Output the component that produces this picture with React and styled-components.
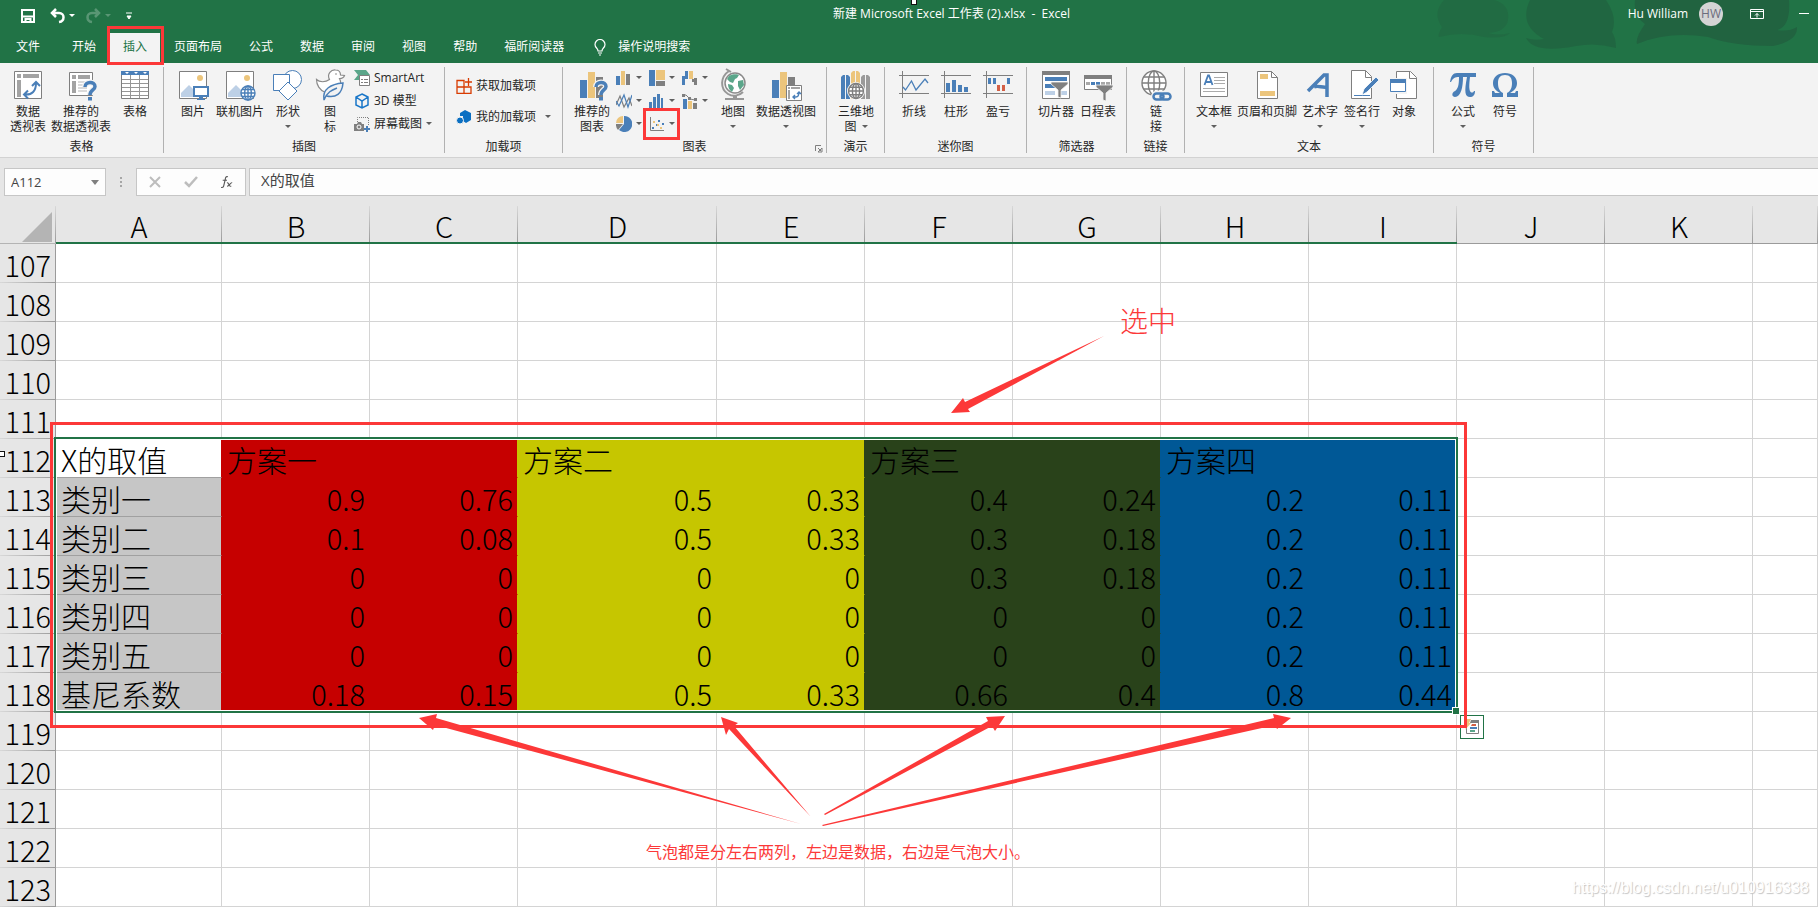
import React from 'react';
import styled, { createGlobalStyle, css } from 'styled-components';

const green = '#217346';
const red = '#fc3838';
const blue = '#4a7fb8';
const gray = '#7f7f7f';
const sand = '#ecc57c';

const GlobalStyle = createGlobalStyle`
  *, *::before, *::after { box-sizing: border-box; }
  body {
    margin: 0;
    background: #fff;
    overflow: hidden;
    font: 12px/15px "Open Sans", "Noto Sans CJK SC", sans-serif;
    color: #262626;
  }
  button, input {
    font: inherit;
    color: inherit;
    background: none;
    border: 0;
    padding: 0;
    margin: 0;
  }
`;

/* ---------- title bar and tabs ---------- */

const TopBar = styled.header`
  position: relative;
  background: ${green};
  color: #fff;
`;

const Backdrop = styled.svg`
  position: absolute;
  top: 0;
  right: 0;
`;

const TitleRow = styled.div`
  position: relative;
  display: grid;
  grid-template-columns: 833fr 985fr;
  align-items: center;
  height: 28px;
`;

const QuickAccess = styled.div`
  display: flex;
  align-items: center;
  padding: 3px 0 0 20px;
`;

const QuickButton = styled.button`
  display: flex;
  align-items: center;
  gap: 4px;
  margin-right: ${(p) => p.$after || 0}px;
  opacity: ${(p) => (p.disabled ? 0.25 : 1)};
`;

const TitleArea = styled.div`
  display: flex;
  align-items: center;
  justify-content: space-between;
  line-height: 24px;
`;

const Title = styled.span`
  white-space: pre;
  margin-bottom: 1px;
`;

const Account = styled.div`
  display: flex;
  align-items: center;
  padding-right: 9px;
`;

const Avatar = styled.span`
  width: 24px;
  height: 24px;
  margin: 0 27px 0 11px;
  border-radius: 50%;
  background: #d4d4d4;
  color: #6c6c7c;
  text-align: center;
`;

const WindowButton = styled.button`
  display: flex;
  margin-right: ${(p) => p.$after || 0}px;
`;

const TabRow = styled.nav`
  position: relative;
  display: flex;
  gap: 1px;
  align-items: flex-end;
  height: 35px;
  padding-left: 3px;
`;

const Tab = styled.button`
  position: relative;
  height: 30px;
  padding: 0 13px 2px;
  line-height: 28px;
  white-space: nowrap;
  margin-right: ${(p) => p.$after || 0}px;
  ${(p) =>
    p.$active &&
    css`
      background: #f3f3f3;
      color: ${green};
      &::after {
        content: '';
        position: absolute;
        z-index: 2;
        inset: -7px -4px -2px -3px;
        border: 3px solid ${red};
      }
    `}
`;

const TellMe = styled.button`
  display: flex;
  align-items: center;
  gap: 12px;
  height: 30px;
  padding: 0 0 2px 16px;
  line-height: 28px;
`;

const PointerMark = styled.i`
  position: absolute;
  z-index: 3;
  width: 6px;
  height: 6px;
  background: #fff;
  border: 1px solid #111;
  ${(p) => (p.$edge === 'top' ? 'left: 911px; top: -1px;' : 'left: -1px; top: 245px;')}
`;

/* ---------- ribbon ---------- */

const Ribbon = styled.div`
  display: flex;
  height: 95px;
  padding: 4px 0;
  background: #f3f3f3;
  border-bottom: 1px solid #d2d2d2;
`;

const Group = styled.section`
  position: relative;
  display: flex;
  flex-direction: column;
  justify-content: space-between;
  flex: 0 0 auto;
  width: ${(p) => p.$width}px;
  border-right: 1px solid #b1b1b1;
`;

const GroupBody = styled.div`
  display: flex;
  height: 69px;
  padding: 2px 0 0 ${(p) => p.$start || 8}px;
`;

const GroupName = styled.div`
  height: 16px;
  line-height: 19px;
  text-align: center;
`;

const BigButton = styled.button`
  display: flex;
  flex-direction: column;
  align-items: center;
  flex: 0 0 ${(p) => p.$width || 42}px;
  width: ${(p) => p.$width || 42}px;
  height: 66px;
  white-space: nowrap;
  text-align: center;
  svg.big { display: block; width: 32px; height: 32px; margin-bottom: 3px; flex: none; overflow: visible; }
`;

const Line = styled.span`
  display: flex;
  align-items: center;
  justify-content: center;
  gap: 5px;
  height: 15px;
`;

const SmallList = styled.div`
  display: flex;
  flex-direction: column;
  gap: ${(p) => p.$gap || 0}px;
  margin: ${(p) => p.$margin || '-3px 0 0 4px'};
`;

const SmallButton = styled.button`
  display: flex;
  align-items: center;
  gap: 4px;
  height: 23px;
  white-space: nowrap;
  svg { flex: none; }
`;

const Arrow = styled.i`
  flex: none;
  width: 0;
  height: 0;
  border: 3px solid transparent;
  border-top-color: ${(p) => p.$color || '#5f5f5f'};
  border-bottom: 0;
  margin-left: ${(p) => p.$before || 0}px;
`;

const ChartGrid = styled.div`
  display: grid;
  grid-template-columns: repeat(3, 33px);
  grid-auto-rows: 23px;
  margin: -3px -1px 0 3px;
`;

const ChartButton = styled.button`
  position: relative;
  display: flex;
  align-items: center;
  gap: 4px;
  ${(p) =>
    p.$marked &&
    css`
      &::after {
        content: '';
        position: absolute;
        z-index: 2;
        inset: -4px 2px -5px -6px;
        border: 3px solid ${red};
      }
    `}
`;

const Launcher = styled.button`
  position: absolute;
  right: 3px;
  bottom: 0;
  display: flex;
`;

/* ---------- formula bar ---------- */

const FormulaBar = styled.div`
  display: flex;
  height: 48px;
  padding: 10px 0 10px 4px;
  background: #e6e6e6;
`;

const Box = styled.div`
  display: flex;
  align-items: center;
  height: 28px;
  background: #fdfdfd;
  border: 1px solid #c6c6c6;
  ${(p) => (p.$width ? `flex: 0 0 ${p.$width}px;` : 'flex: 1; border-right: 0;')}
`;

const NameInput = styled.input`
  width: 86px;
  padding-left: 6px;
  font-size: 13px;
  line-height: 20px;
  outline: 0;
  color: #444;
`;

const FormulaInput = styled.input`
  flex: 1;
  padding: 0 0 4px 11px;
  font-size: 15px;
  line-height: 20px;
  outline: 0;
  color: #444;
`;

const Dots = styled.span`
  display: flex;
  flex-direction: column;
  justify-content: center;
  gap: 2px;
  width: 30px;
  padding-left: 14px;
  i { width: 2px; height: 2px; background: #a6a6a6; }
`;

const FormulaButtons = styled(Box)`
  justify-content: space-between;
  padding: 0 12px;
  margin-right: 3px;
  button { display: flex; }
`;

/* ---------- sheet ---------- */

const Sheet = styled.main`
  position: relative;
`;

const Grid = styled.table`
  width: 100%;
  table-layout: fixed;
  border-collapse: separate;
  border-spacing: 0;
  color: #000;
`;

const Column = styled.col`
  width: ${(p) => (p.$width ? `${p.$width}px` : 'auto')};
`;

const cellBase = css`
  height: 39px;
  padding: 1px 4px 0 5px;
  white-space: nowrap;
  vertical-align: middle;
  font-family: "Noto Sans CJK SC", sans-serif;
  font-size: 29px;
  line-height: 32px;
  font-weight: 300;
`;

const headLine = (dir) => css`
  background: linear-gradient(${dir}, #d8d8d8, #9b9b9b) ${dir === 'to right' ? 'bottom / 100% 1px' : 'right / 1px 100%'} no-repeat #e6e6e6;
`;

const ColHead = styled.th`
  ${cellBase}
  height: 38px;
  padding: 1px 0 0;
  ${headLine('to bottom')}
  border-bottom: ${(p) => (p.$selected ? `2px solid ${green}` : '1px solid #9b9b9b')};
`;

const Corner = styled.th`
  height: 38px;
  padding: 4px 3px 0 22px;
  ${headLine('to bottom')}
  border-bottom: 1px solid #b4b4b4;
  svg { display: block; }
`;

const RowHead = styled.th`
  ${cellBase}
  padding: 1px 4px 0 0;
  text-align: right;
  ${headLine('to right')}
  border-right: 1px solid #9b9b9b;
`;

const Cell = styled.td`
  ${cellBase}
  font-size: ${(p) => (p.$text ? 30 : 29)}px;
  overflow: ${(p) => (p.$text ? 'hidden' : 'visible')};
  text-align: ${(p) => (p.$text ? 'left' : 'right')};
  background: ${(p) => p.$fill || '#fff'};
  border-right: 1px solid ${(p) => p.$right || '#d4d4d4'};
  border-bottom: 1px solid ${(p) => p.$bottom || '#d4d4d4'};
`;

const Selection = styled.div`
  position: absolute;
  left: 54px;
  top: 231px;
  width: 1404px;
  height: 276px;
  border: 2px solid ${green};
  box-shadow: inset 0 0 0 1px #fff;
  &::after {
    content: '';
    position: absolute;
    right: -4px;
    bottom: -4px;
    width: 8px;
    height: 8px;
    background: ${green};
    border: 1px solid #fff;
  }
`;

const MarkFrame = styled.div`
  position: absolute;
  left: 50px;
  top: 216px;
  width: 1417px;
  height: 306px;
  border: 3px solid ${red};
`;

const QuickAnalysis = styled.button`
  position: absolute;
  left: 1460px;
  top: 509px;
  width: 24px;
  height: 24px;
  background: #fff;
  border: 1px solid ${green};
  display: flex;
  align-items: center;
  justify-content: center;
`;

const Arrows = styled.svg`
  position: absolute;
  left: 0;
  top: 0;
  pointer-events: none;
`;

const Note = styled.p`
  position: absolute;
  margin: 0;
  color: ${red};
  white-space: nowrap;
  font-family: "Noto Sans CJK SC", sans-serif;
  ${(p) =>
    p.$large
      ? 'left: 1120px; top: 94px; font-size: 28px; line-height: 40px; font-weight: 300;'
      : 'left: 646px; top: 633px; font-size: 16px; line-height: 24px;'}
`;

const Watermark = styled.span`
  position: absolute;
  right: 9px;
  bottom: 7px;
  font: 16px/24px "Liberation Sans", sans-serif;
  color: #fff;
  text-shadow: 1px 1px 1px #c4c4c4;
`;

/* ---------- icons ---------- */

const Globe = ({ x, y, r, c }) => (
  <g stroke={c} fill="none" strokeWidth="1.4">
    <circle cx={x} cy={y} r={r} fill="#fff" />
    <ellipse cx={x} cy={y} rx={r * 0.48} ry={r} />
    <path d={`M${x - r} ${y}h${2 * r}M${x} ${y - r}v${2 * r}M${x - r * 0.85} ${y - r / 2}h${r * 1.7}M${x - r * 0.85} ${y + r / 2}h${r * 1.7}`} />
  </g>
);

const Question = () => (
  <g>
    <path d="M20 18C20 12 30 12 30 17.500C30 21 25 21 25 26" fill="none" stroke="#f3f3f3" strokeWidth="6" />
    <path d="M20 18C20 12 30 12 30 17.500C30 21 25 21 25 26" fill="none" stroke={blue} strokeWidth="3.500" />
    <path d="M23 28h4v3.500h-4z" fill={blue} />
  </g>
);

const Funnel = ({ x, y }) => (
  <path d={`M${x} ${y}h17v2l-7 6v8l-3 -1v-7l-7 -6z`} fill={gray} stroke="#f3f3f3" strokeWidth=".8" />
);

const Swap = ({ d }) => (
  <path d={d} fill="none" stroke={blue} strokeWidth="2" />
);

const bigIcons = {
  pivot: (
    <>
      <path d="M2.500 2.500h27v27h-27z" fill="#fff" stroke={gray} />
      <path d="M5 5h4v4H5zM11 5h16v4H11zM5 11h4v17H5z" fill="#a3a3a3" />
      <Swap d="M13 25.500C20 26 24 22 24 14M20 17l4 -4 4 4M16 21.500l-4 4 4 4" />
    </>
  ),
  recommended: (
    <>
      <path d="M4.500 3.500h23v23h-23z" fill="#fff" stroke={gray} />
      <path d="M7 6h4v4H7zM13 6h12v4H13zM7 12h4v12H7z" fill="#a3a3a3" />
      <path d="M13 13h9M13 16h6M13 19h9M13 22h9" stroke="#b5b5b5" />
      <Question />
    </>
  ),
  table: (
    <>
      <path d="M2.500 2.500h27v27h-27z" fill="#fff" stroke={gray} />
      <path d="M2 2h28v4H2z" fill={blue} />
      <path d="M6 3h4l-2 2zM15 3h4l-2 2zM24 3h4l-2 2z" fill="#fff" />
      <path d="M3 10.500h26M3 14.500h26M3 18.500h26M3 22.500h26M3 26.500h26M11.500 6v23M20.500 6v23" stroke="#969696" />
    </>
  ),
  picture: (
    <>
      <path d="M2.500 2.500h27v27h-27z" fill="#fff" stroke={gray} />
      <circle cx="23" cy="9" r="3" fill={sand} />
      <path d="M4 28v-4l8-8 12 12z" fill="#bdd0e6" />
      <path d="M17 18h14v9H17z" fill="#fff" stroke={blue} strokeWidth="2" />
      <path d="M22 28h4v2h-4zM20 30h8v1h-8z" fill={blue} />
    </>
  ),
  online: (
    <>
      <path d="M2.500 2.500h27v27h-27z" fill="#fff" stroke={gray} />
      <circle cx="23" cy="9" r="3" fill={sand} />
      <path d="M4 28v-4l8-8 12 12z" fill="#bdd0e6" />
      <Globe x={24} y={24} r={7} c={blue} />
    </>
  ),
  shapes: (
    <g fill="#fff" stroke={blue}>
      <circle cx="20.500" cy="10.500" r="9" />
      <path d="M1.500 5.500h16v16h-16z" />
      <path d="M16 13l9 9-9 9-9-9z" />
    </g>
  ),
  duck: (
    <>
      <path d="M2.500 10.500c3 3 9 3 13 0c-3-6 2-10 6-9.500c3 0 5 2 5 5l4 .5c-1 3-3 3-5 3c2 4 1 7 0 9c-2 5-8 7-14 5c-6-2-9-8-9-13z" fill="#fff" stroke="#8a8a8a" strokeWidth="1.200" />
      <circle cx="22" cy="5" r=".8" fill={gray} />
      <path d="M10 31C8 20 17 15 29 14C28 25 22 29 12.500 27M10 31C13 23 18 21 23 19" fill="#f3f3f3" stroke={blue} strokeWidth="1.500" />
    </>
  ),
  recChart: (
    <>
      <path d="M4 11h7v18H4z" fill={blue} />
      <path d="M12 3h7v26h-7z" fill={sand} />
      <path d="M20 8h7v21h-7z" fill={gray} />
      <Question />
    </>
  ),
  map: (
    <>
      <circle cx="18" cy="14" r="10" fill="#fff" stroke="#8a8a8a" strokeWidth="1.500" />
      <path d="M12 7c3-2 8-2 10-1l-2 3-2 1-2 4-3-1-3-3zM21 12l5-1 1 5-4 5-2-4zM11 15l4 1 2 3-2 4c-3-2-4-5-4-8z" fill="#5ba68a" />
      <path d="M12 2C3 8 3 20 11 25c5 3 11 2 15-2M9 0l5 3" fill="none" stroke="#979797" strokeWidth="2" />
      <path d="M16 26h4v3h7v2H8v-2h8z" fill="#979797" />
    </>
  ),
  pivotChart: (
    <>
      <path d="M2 11h7v18H2z" fill={blue} />
      <path d="M10 3h7v26h-7z" fill={sand} />
      <path d="M18 8h7v10h-7z" fill={gray} />
      <path d="M16.500 16.500h15v15h-15z" fill="#fff" stroke={gray} />
      <path d="M18 18h2v2h-2zM21 18h9v2h-9zM18 21h2v9h-2z" fill="#a3a3a3" />
      <path d="M23 28h3c2 0 3-2 3-5M27 25l2-2 2 2M25 26l-2 2 2 2" fill="none" stroke={blue} strokeWidth="1.400" />
    </>
  ),
  map3d: (
    <>
      <path d="M1 8l2-2 2 0v24H1zM6 6h2l2 2v22H6z" fill={blue} />
      <path d="M11 4l2-2h2v28h-4zM16 2h2l2 2v26h-4z" fill={sand} />
      <path d="M21 8l2-2h2v24h-4zM26 6h2l2 2v22h-4z" fill="#9a9a9a" />
      <circle cx="16" cy="22" r="9" fill="#fff" />
      <Globe x={16} y={22} r={7.5} c={gray} />
    </>
  ),
  sparkLine: (
    <g fill="none">
      <path d="M4.500 2v27M1 6.500h30M1 24.500h30" stroke={gray} />
      <path d="M5 18l2.500 3 6-9 4.500 9 9-11 3 4" stroke={blue} strokeWidth="1.300" />
    </g>
  ),
  sparkColumn: (
    <>
      <path d="M4.500 2v27M1 6.500h30M1 24.500h30" stroke={gray} />
      <path d="M6 14h4v9H6zM12 11h4v12h-4zM18 16h4v7h-4zM24 18h4v5h-4z" fill={blue} />
    </>
  ),
  sparkWin: (
    <>
      <path d="M4.500 2v27M1 6.500h30M1 24.500h30" stroke={gray} />
      <path d="M6 9h3v6H6zM11 9h3v6h-3zM25 9h3v6h-3z" fill={blue} />
      <path d="M15 16h3v6h-3zM20 16h3v6h-3z" fill="#d35f45" />
    </>
  ),
  slicer: (
    <>
      <path d="M2.500 2.500h27v27h-27z" fill="#fff" stroke={gray} />
      <path d="M2 2h28v4H2z" fill={gray} />
      <path d="M5 8h22v4H5zM5 15h10v4H5z" fill={blue} />
      <path d="M5 22h10v4H5zM20 22h7v4h-7z" fill="#bdd0e6" />
      <Funnel x={11} y={13} />
    </>
  ),
  timeline: (
    <>
      <path d="M2.500 6.500h27v14h-27z" fill="#fff" stroke={gray} />
      <path d="M2 6h28v4H2z" fill={gray} />
      <path d="M4 13h4v3H4zM19 13h4v3h-4zM24 13h4v3h-4z" fill="#a8a8a8" />
      <path d="M9 13h4v3H9zM14 13h4v3h-4z" fill={blue} />
      <Funnel x={14} y={16} />
    </>
  ),
  link: (
    <>
      <Globe x={14} y={14} r={12} c={gray} />
      <g fill="none" stroke="#f3f3f3" strokeWidth="6"><rect x="14" y="24.500" width="10" height="6" rx="3" /><rect x="21" y="24.500" width="10" height="6" rx="3" /></g>
      <g fill="none" stroke={blue} strokeWidth="2.500"><rect x="13.500" y="24.500" width="10" height="6" rx="3" /><rect x="20.500" y="24.500" width="10" height="6" rx="3" /></g>
    </>
  ),
  textbox: (
    <>
      <path d="M2.500 3.500h27v24h-27z" fill="#fff" stroke={gray} />
      <path d="M16 8.500h11M16 11.500h11M16 14.500h11M5 19.500h22M5 22.500h22" stroke="#ababab" />
      <path d="M6.500 16l3.500-9.500h1l3.500 9.500M8 13h5.500" fill="none" stroke={blue} strokeWidth="1.800" />
    </>
  ),
  headerFooter: (
    <>
      <path d="M6.500 2.500h14l6 6v21h-20z" fill="#fff" stroke={gray} />
      <path d="M20.500 2.500v6h6" fill="none" stroke={gray} />
      <path d="M9 5h8v5H9zM9 22h15v5H9z" fill={sand} />
    </>
  ),
  wordArt: (
    <path d="M4 22L20 6l3 0 0 22M10 18c4-2 8 1 13 0" fill="none" stroke={blue} strokeWidth="3.500" />
  ),
  signature: (
    <>
      <path d="M5.500 1.500h14l6 6v22h-20z" fill="#fff" stroke={gray} />
      <path d="M19.500 1.500v7h6" fill="none" stroke={gray} />
      <path d="M8 26.500h16" stroke={blue} />
      <path d="M18 20L30 8l3 3-12 12-5 3z" fill={blue} stroke="#fff" strokeWidth=".8" />
    </>
  ),
  object: (
    <>
      <path d="M8.500 2.500h14l6 6v21h-20z" fill="#fff" stroke={gray} />
      <path d="M21.500 2.500v7h7" fill="none" stroke={gray} />
      <path d="M1 9h18v16H1z" fill="#f3f3f3" />
      <path d="M2.500 10.500h15v12h-15z" fill="#fff" stroke={blue} />
      <path d="M2 10h16v4H2z" fill={blue} />
    </>
  ),
  pi: (
    <path d="M3 13C4 7 6 4 10 4h19v4h-6c-1 8-1 12-0 14c1 2 3 2 4 0l1 0c0 4-2 6-5 6c-5 0-6-5-3-20h-4c0 10-2 20-8 20c-3 0-4-4 0-6c3-2 4-6 4-14c-4 0-6 1-8 5z" fill={blue} />
  ),
  omega: (
    <path d="M3 28v-6h2l1 2h5C5 21 4 17 4 14C4 8 9 4 16 4s12 4 12 10c0 3-1 7-7 10h5l1-2h2v6H18v-4c4-2 5-6 5-10c0-5-2-8-7-8s-7 3-7 8c0 4 1 8 5 10v4z" fill={blue} />
  ),
};

const chartIcons = [
  <>
    <path d="M0 6h4v9H0z" fill={blue} />
    <path d="M5 1h4v14H5z" fill={sand} />
    <path d="M10 4h4v11h-4z" fill={gray} />
  </>,
  <>
    <path d="M0 0h6v16H0z" fill={blue} />
    <path d="M7 0h9v10H7z" fill={sand} />
    <path d="M7 11h9v5H7z" fill={gray} />
  </>,
  <>
    <path d="M0 6h3v9H0zM3 1h3v8H3z" fill={blue} />
    <path d="M7 1h4v8H7z" fill={sand} />
    <path d="M10 9h2v-1h3v7h-3v-3h-2z" fill={gray} />
  </>,
  <g fill="none" strokeWidth="1.200">
    <path d="M0 12l4-9 4 11 5-9 3 8" stroke={gray} />
    <path d="M0 8l3 5 5-11 4 12 4-12" stroke={blue} />
  </g>,
  <path d="M0 9h3v6H0zM4 4h3v11H4zM8 1h3v14H8zM12 5h2v10h-2z" fill={blue} />,
  <>
    <path d="M1 6h4v10H1z" fill={blue} />
    <path d="M6 8h4v8H6z" fill={sand} />
    <path d="M11 10h4v6h-4z" fill={gray} />
    <path d="M1 2h3l4 4 5 1" fill="none" stroke={gray} />
    <path d="M0 1h3v3H0zM6 4h3v3H6zM12 5h3v3h-3z" fill={gray} />
  </>,
  <>
    <path d="M8 0a8 8 0 1 1-5 14l5-6z" fill={blue} />
    <path d="M7 0v7H0a7 7 0 0 1 7-7z" fill={sand} />
    <path d="M0 8h7l-5 6a8 8 0 0 1-2-6z" fill={gray} />
  </>,
  <>
    <path d="M1.500 1v13.500H15" fill="none" stroke={gray} />
    <path d="M3 11h2v2H3zM7 8h2v2H7zM9 4h2v2H9zM13 7h2v2h-2z" fill={blue} />
    <path d="M4 5h2v2H4zM8 8h2v2H8zM11 11h2v2h-2z" fill={sand} />
  </>,
];

const SmallSvg = ({ children, size = 16 }) => (
  <svg width={size} height={size} viewBox="0 0 16 16">{children}</svg>
);

function Command({ icon, lines, width, arrow, inlineArrow }) {
  return (
    <BigButton $width={width} type="button">
      <svg className="big" viewBox="0 0 32 32">{bigIcons[icon]}</svg>
      {lines.map((text, i) => (
        <Line key={text}>
          {text}
          {inlineArrow && i === lines.length - 1 && <Arrow />}
        </Line>
      ))}
      {arrow && <Line><Arrow /></Line>}
    </BigButton>
  );
}

function RibbonGroup({ width, name, start, children, extra }) {
  return (
    <Group $width={width}>
      <GroupBody $start={start}>{children}</GroupBody>
      <GroupName>{name}</GroupName>
      {extra}
    </Group>
  );
}

/* ---------- data ---------- */

const tabs = ['开始', '插入', '页面布局', '公式', '数据', '审阅', '视图', '帮助', '福昕阅读器'];
const columns = [
  ['A', 166], ['B', 148], ['C', 148], ['D', 199], ['E', 148], ['F', 148],
  ['G', 148], ['H', 148], ['I', 148], ['J', 148], ['K', 148], ['', 0],
];
const fills = ['#c6c6c6', '#c60000', '#c60000', '#c6c600', '#c6c600', '#29421a', '#29421a', '#005896', '#005896'];
const data = {
  112: ['X的取值', '方案一', '', '方案二', '', '方案三', '', '方案四', ''],
  113: ['类别一', '0.9', '0.76', '0.5', '0.33', '0.4', '0.24', '0.2', '0.11'],
  114: ['类别二', '0.1', '0.08', '0.5', '0.33', '0.3', '0.18', '0.2', '0.11'],
  115: ['类别三', '0', '0', '0', '0', '0.3', '0.18', '0.2', '0.11'],
  116: ['类别四', '0', '0', '0', '0', '0', '0', '0.2', '0.11'],
  117: ['类别五', '0', '0', '0', '0', '0', '0', '0.2', '0.11'],
  118: ['基尼系数', '0.18', '0.15', '0.5', '0.33', '0.66', '0.4', '0.8', '0.44'],
};
const rows = Array.from({ length: 17 }, (_, i) => 107 + i);

function SheetRow({ number }) {
  const values = data[number];
  return (
    <tr>
      <RowHead scope="row">{number}</RowHead>
      {columns.map(([letter], c) => {
        if (!values || c > 8) return <Cell key={c} />;
        return (
          <Cell
            key={c}
            $text={c === 0 || number === 112}
            $fill={number === 112 && c === 0 ? '#fff' : fills[c]}
            $right={fills[c + 1]}
            $bottom={c === 0 ? '#a0a0a0' : fills[c]}
          >
            {values[c]}
          </Cell>
        );
      })}
    </tr>
  );
}

export default function App() {
  return (
    <>
      <GlobalStyle />
      <TopBar>
        <Backdrop width="400" height="63" viewBox="0 0 400 63" fill="#216340">
          <path opacity=".5" d="M26 0h50q16 4 14 20q-2 12-20 13q10 3 22 0q-6 6-26 4q-22-6-45 0q-2-1 3-10q-10-14 2-27z" />
          <path opacity=".8" d="M112 0h76q12 18 6 32q4 6 4 16q-20-6-40-2q-42 8-50-8q8 3 18 1q-26-14-14-39z" />
          <path d="M217 0h154q2 26-12 30q12 2 20-3q1 14-24 19q-40 0-65-9q-40-6-71 7q-2-6 8-20q-12-8-10-24z" />
        </Backdrop>
        <TitleRow>
          <QuickAccess>
            <QuickButton $after={14} type="button" aria-label="保存">
              <SmallSvg><path d="M2 2h12v12H2zM3 8.500h10M5.500 14v-3h5v3" fill="none" stroke="#fff" strokeWidth="2" /></SmallSvg>
            </QuickButton>
            <QuickButton $after={10} type="button" aria-label="撤消">
              <SmallSvg><path d="M6 1L2 5l4 4M2 5h7c6 0 6 8 0 9" fill="none" stroke="#fff" strokeWidth="2.500" /></SmallSvg>
              <Arrow $color="#fff" $before={-1} />
            </QuickButton>
            <QuickButton $after={15} disabled type="button" aria-label="恢复">
              <SmallSvg><path d="M10 1l4 4-4 4M14 5H7c-6 0-6 8 0 9" fill="none" stroke="#fff" strokeWidth="2.500" /></SmallSvg>
              <Arrow $color="#fff" />
            </QuickButton>
            <QuickButton type="button" aria-label="自定义快速访问工具栏">
              <svg width="6" height="8"><path d="M0 1h6M1 4h4l-2 3z" fill="#fff" stroke="#fff" /></svg>
            </QuickButton>
          </QuickAccess>
          <TitleArea>
            <Title>{'新建 Microsoft Excel 工作表 (2).xlsx  -  Excel'}</Title>
            <Account>
              <span>Hu William</span>
              <Avatar>HW</Avatar>
              <WindowButton $after={35} type="button" aria-label="功能区显示选项">
                <svg width="14" height="10" fill="none" stroke="#fff"><path d="M.5.5h13v9H.5zM1 2.500h12M7 8.500v-4M5 6.500l2-2 2 2" /></svg>
              </WindowButton>
              <WindowButton type="button" aria-label="最小化">
                <svg width="10" height="2"><path d="M0 0h10v1H0z" fill="#fff" /></svg>
              </WindowButton>
            </Account>
          </TitleArea>
        </TitleRow>
        <TabRow>
          <Tab $after={5} type="button">文件</Tab>
          {tabs.map((t) => <Tab key={t} $active={t === '插入'} type="button">{t}</Tab>)}
          <TellMe type="button">
            <svg width="12" height="17" viewBox="0 0 12 17" fill="none" stroke="#fff" strokeWidth="1.200"><path d="M4 12C4 9 1 9 1 5.500a5 5 0 0 1 10 0C11 9 8 9 8 12zM4 14h4M5 16h2" /></svg>
            操作说明搜索
          </TellMe>
        </TabRow>
        <PointerMark $edge="top" />
      </TopBar>

      <Ribbon>
        <RibbonGroup width={164} name="表格" start={7}>
          <Command icon="pivot" lines={['数据', '透视表']} />
          <Command icon="recommended" lines={['推荐的', '数据透视表']} width={64} />
          <Command icon="table" lines={['表格']} width={44} />
        </RibbonGroup>
        <RibbonGroup width={281} name="插图">
          <Command icon="picture" lines={['图片']} />
          <Command icon="online" lines={['联机图片']} width={52} />
          <Command icon="shapes" lines={['形状']} width={44} arrow />
          <Command icon="duck" lines={['图', '标']} width={40} />
          <SmallList>
            <SmallButton type="button">
              <SmallSvg><path d="M0 0h12l4 5H6v5H0l4-5z" fill="#5ba68a" /><path d="M5.500 5.500h10v10h-10z" fill="#fff" stroke={gray} /><path d="M7 9.500h2M10 9.500h4M7 12.500h2M10 12.500h4" stroke={gray} /></SmallSvg>
              SmartArt
            </SmallButton>
            <SmallButton type="button">
              <SmallSvg><path d="M8 1l6 3v8l-6 3-6-3V4zM2 4l6 4 6-4M8 8v7" fill="none" stroke="#1a77c9" strokeWidth="1.500" /></SmallSvg>
              3D 模型
            </SmallButton>
            <SmallButton type="button">
              <SmallSvg><path d="M3.500 6V1.500h11V10" fill="none" stroke={gray} strokeDasharray="1 1" /><path d="M0 8h3l1-2h3l1 2h2v7H0z" fill={gray} /><circle cx="5" cy="11" r="2" fill="none" stroke="#fff" /><path d="M10 13h6M13 10v6" stroke={blue} strokeWidth="2" /></SmallSvg>
              屏幕截图
              <Arrow />
            </SmallButton>
          </SmallList>
        </RibbonGroup>
        <RibbonGroup width={118} name="加载项">
          <SmallList $margin="5px 0 0 3px" $gap={8}>
            <SmallButton type="button">
              <SmallSvg><path d="M1 2.500h7v13H1zM1 9h14v6.500H1M12.500 0v8M9 4h7" fill="none" stroke="#d83b01" strokeWidth="1.300" /></SmallSvg>
              获取加载项
            </SmallButton>
            <SmallButton type="button">
              <SmallSvg><path d="M9 1l6 3v7l-5 3-3-2V7H4V4z" fill="#0a6fc2" /><circle cx="4" cy="11.500" r="3.500" fill="#0a6fc2" stroke="#f3f3f3" /></SmallSvg>
              我的加载项
              <Arrow $before={5} />
            </SmallButton>
          </SmallList>
        </RibbonGroup>
        <RibbonGroup
          width={264}
          name="图表"
          extra={(
            <Launcher type="button" aria-label="图表选项">
              <svg width="8" height="8" fill="none" stroke={gray}><path d="M.5 6V.5H6M3 3l3 3M7 3v4H3z" /></svg>
            </Launcher>
          )}
        >
          <Command icon="recChart" lines={['推荐的', '图表']} />
          <ChartGrid>
            {chartIcons.map((icon, i) => (
              <ChartButton key={i} type="button" $marked={i === 7} aria-label={`图表 ${i + 1}`}>
                <SmallSvg>{icon}</SmallSvg>
                <Arrow />
              </ChartButton>
            ))}
          </ChartGrid>
          <Command icon="map" lines={['地图']} width={38} arrow />
          <Command icon="pivotChart" lines={['数据透视图']} width={68} arrow />
        </RibbonGroup>
        <RibbonGroup width={58} name="演示">
          <Command icon="map3d" lines={['三维地', '图']} inlineArrow />
        </RibbonGroup>
        <RibbonGroup width={142} name="迷你图">
          <Command icon="sparkLine" lines={['折线']} />
          <Command icon="sparkColumn" lines={['柱形']} />
          <Command icon="sparkWin" lines={['盈亏']} />
        </RibbonGroup>
        <RibbonGroup width={100} name="筛选器">
          <Command icon="slicer" lines={['切片器']} />
          <Command icon="timeline" lines={['日程表']} />
        </RibbonGroup>
        <RibbonGroup width={58} name="链接">
          <Command icon="link" lines={['链', '接']} />
        </RibbonGroup>
        <RibbonGroup width={249} name="文本">
          <Command icon="textbox" lines={['文本框']} arrow />
          <Command icon="headerFooter" lines={['页眉和页脚']} width={64} />
          <Command icon="wordArt" lines={['艺术字']} arrow />
          <Command icon="signature" lines={['签名行']} arrow />
          <Command icon="object" lines={['对象']} />
        </RibbonGroup>
        <RibbonGroup width={100} name="符号">
          <Command icon="pi" lines={['公式']} arrow />
          <Command icon="omega" lines={['符号']} />
        </RibbonGroup>
      </Ribbon>

      <FormulaBar>
        <Box $width={102}>
          <NameInput aria-label="名称框" defaultValue="A112" />
          <svg width="8" height="5"><path d="M0 0h8L4 5z" fill={gray} /></svg>
        </Box>
        <Dots><i /><i /><i /></Dots>
        <FormulaButtons $width={110}>
          <button type="button" aria-label="取消"><svg width="12" height="12"><path d="M1 1l10 10M11 1L1 11" stroke="#bdbdbd" strokeWidth="2" /></svg></button>
          <button type="button" aria-label="输入"><svg width="14" height="12"><path d="M1 6l4 4 8-9" fill="none" stroke="#bdbdbd" strokeWidth="2.500" /></svg></button>
          <button type="button" aria-label="插入函数">
            <svg width="12" height="14" viewBox="0 0 14 14" fill="none" stroke="#555" strokeWidth="1.300"><path d="M8 1C6 0 5 2 5 4L3 12C3 13 1 14 0 13M2 5h5M7 8c2-1 2 4 4 4h1M13 8c-2-1-3 4-6 4" /></svg>
          </button>
        </FormulaButtons>
        <Box>
          <FormulaInput aria-label="编辑栏" defaultValue="X的取值" />
        </Box>
      </FormulaBar>

      <Sheet>
        <Grid>
          <colgroup>
            <Column $width={56} />
            {columns.map(([letter, w]) => <Column key={letter} $width={w} />)}
          </colgroup>
          <thead>
            <tr>
              <Corner aria-label="全选">
                <svg width="30" height="30"><path d="M30 0v30H0z" fill="#b4b4b4" /></svg>
              </Corner>
              {columns.map(([letter], i) => (
                <ColHead key={letter} scope="col" $selected={i < 9}>{letter}</ColHead>
              ))}
            </tr>
          </thead>
          <tbody>
            {rows.map((n) => <SheetRow key={n} number={n} />)}
          </tbody>
        </Grid>
        <Selection />
        <QuickAnalysis type="button" aria-label="快速分析">
          <svg width="16" height="16">
            <path d="M2.500 8v6.500h12V2" fill="none" stroke={gray} />
            <path d="M7 1h8v3H6z" fill={gray} />
            <path d="M3 0h4L5 4h2L1 11l2-5H1z" fill={sand} />
            <path d="M8 5h4v2H7z" fill="#d35f45" />
            <path d="M6 8h7v2H6z" fill={blue} />
            <path d="M6 11h5v2H6z" fill="#5ba68a" />
          </svg>
        </QuickAnalysis>
        <MarkFrame />
        <Arrows width="1500" height="701" viewBox="0 206 1500 701" fill={red}>
          <path d="M951 413L963 398L965 402L1104 336L968 409L970 412z" />
          <path d="M419 718L437 714L436 718L801 824L435 725L433 730z" />
          <path d="M721 717L738 723L734 726L811 817L729 729L726 735z" />
          <path d="M1005 716L986 717L988 721L824 814L825 815L992 726L995 731z" />
          <path d="M1291 718L1273 714L1274 718L822 825L823 826L1275 725L1277 729z" />
        </Arrows>
        <Note $large>选中</Note>
        <Note>气泡都是分左右两列，左边是数据，右边是气泡大小。</Note>
        <PointerMark />
        <Watermark>https://blog.csdn.net/u010916338</Watermark>
      </Sheet>
    </>
  );
}
